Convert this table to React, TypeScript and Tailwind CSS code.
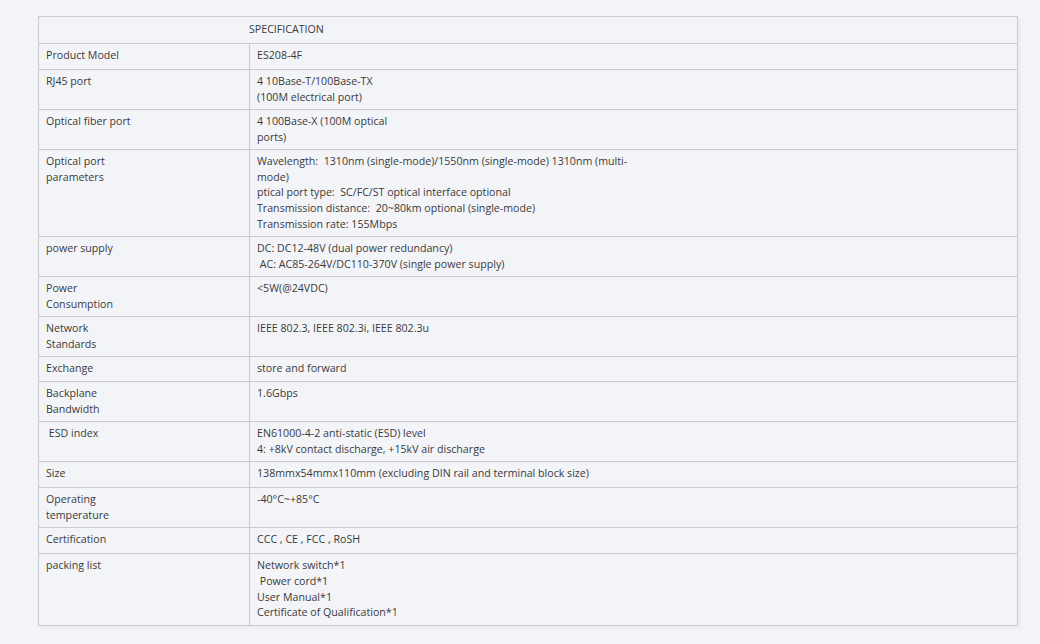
import React from "react";

type Row = { l: string[]; r: string[]; h?: string };

const rows: Row[] = [
  { l: ["Product Model"], r: ["ES208-4F"], h: "h-[26px]" },
  { l: ["RJ45 port"], r: ["4 10Base-T/100Base-TX", "(100M electrical port)"] },
  { l: ["Optical fiber port"], r: ["4 100Base-X (100M optical", "ports)"] },
  {
    l: ["Optical port", "parameters"],
    r: [
      "Wavelength:  1310nm (single-mode)/1550nm (single-mode) 1310nm (multi-",
      "mode)",
      "ptical port type:  SC/FC/ST optical interface optional",
      "Transmission distance:  20~80km optional (single-mode)",
      "Transmission rate: 155Mbps",
    ],
  },
  {
    l: ["power supply"],
    r: ["DC: DC12-48V (dual power redundancy)", " AC: AC85-264V/DC110-370V (single power supply)"],
  },
  { l: ["Power", "Consumption"], r: ["<5W(@24VDC)"] },
  { l: ["Network", "Standards"], r: ["IEEE 802.3, IEEE 802.3i, IEEE 802.3u"] },
  { l: ["Exchange"], r: ["store and forward"], h: "h-[25px]" },
  { l: ["Backplane", "Bandwidth"], r: ["1.6Gbps"] },
  {
    l: [" ESD index"],
    r: ["EN61000-4-2 anti-static (ESD) level", "4: +8kV contact discharge, +15kV air discharge"],
  },
  {
    l: ["Size"],
    r: ["138mmx54mmx110mm (excluding DIN rail and terminal block size)"],
    h: "h-[26px]",
  },
  { l: ["Operating", "temperature"], r: ["-40°C~+85°C"] },
  { l: ["Certification"], r: ["CCC , CE , FCC , RoSH"], h: "h-[26px]" },
  {
    l: ["packing list"],
    r: ["Network switch*1", " Power cord*1", "User Manual*1", "Certificate of Qualification*1"],
  },
];

function Lines({ lines }: { lines: string[] }) {
  return (
    <>
      {lines.map((t, i) => (
        <div key={i} className="whitespace-pre">
          {t}
        </div>
      ))}
    </>
  );
}

export default function App() {
  return (
    <div
      className="w-[1040px] h-[644px] bg-[#f3f4f8] pt-[16px] pl-[38px] text-[#3a3a3a] text-[10.65px] leading-[15.7px]"
      style={{ fontFamily: '"Open Sans", "Noto Sans", sans-serif' }}
    >
      <table className="w-[980px] border-collapse border border-[#c9cacd] shadow-[3px_3px_0_#eceef2]">
        <colgroup>
          <col className="w-[211px]" />
          <col />
        </colgroup>
        <tbody>
          <tr>
            <td colSpan={2} className="h-[27px] pl-[210px] align-middle border-b border-[#c9cacd]">
              SPECIFICATION
            </td>
          </tr>
          {rows.map((row, i) => (
            <tr key={i} className={row.h ?? ""}>
              <td className="align-top border border-[#c9cacd] pl-[7px] pt-[4px] pb-[3.6px]">
                <Lines lines={row.l} />
              </td>
              <td className="align-top border border-[#c9cacd] pl-[7px] pt-[4px] pb-[3.6px]">
                <Lines lines={row.r} />
              </td>
            </tr>
          ))}
        </tbody>
      </table>
    </div>
  );
}
